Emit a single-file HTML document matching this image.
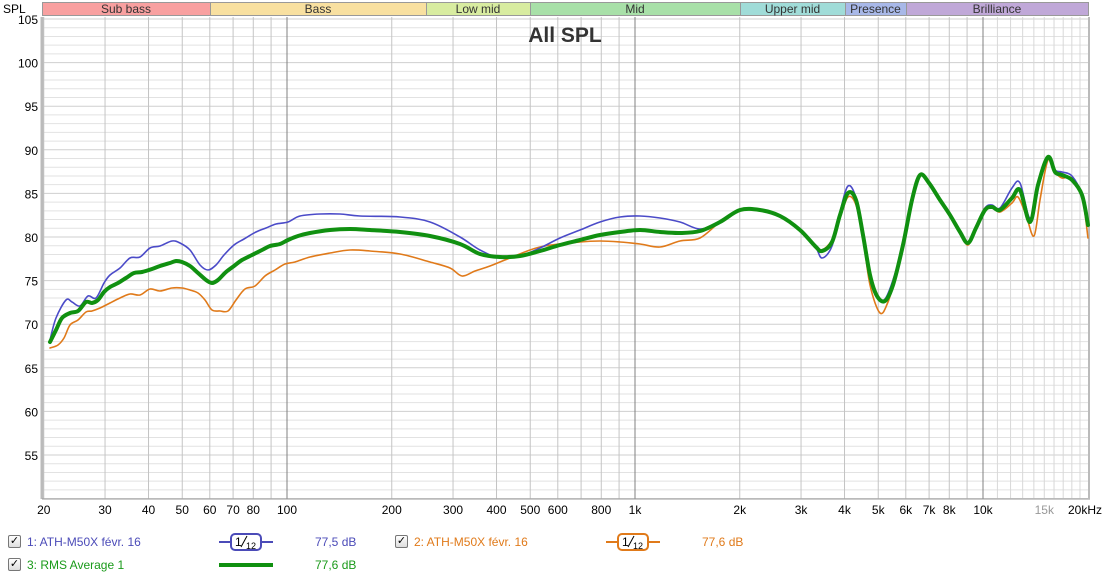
<!DOCTYPE html>
<html><head><meta charset="utf-8"><style>
body{margin:0;width:1110px;height:580px;background:#fff;overflow:hidden;font-family:"Liberation Sans",sans-serif;position:relative}
.t{position:absolute;font-size:12px;white-space:nowrap}
.cb{position:absolute;width:11px;height:11px;border:1px solid #777;border-radius:2px;background:linear-gradient(#fff,#ddd);font-size:11px;line-height:11px;text-align:center;color:#000}
</style></head><body>
<svg id="s" width="1110" height="580" style="position:absolute;left:0;top:0" xmlns="http://www.w3.org/2000/svg" font-family="Liberation Sans, sans-serif"></svg>
<div class="cb" style="left:8px;top:535px">✓</div>
<div class="t" style="left:27px;top:535px;color:#4b4bb8">1: ATH-M50X févr. 16</div>
<div class="t" style="left:315px;top:535px;color:#4b4bb8">77,5 dB</div>
<div class="cb" style="left:395px;top:535px">✓</div>
<div class="t" style="left:414px;top:535px;color:#e07a1a">2: ATH-M50X févr. 16</div>
<div class="t" style="left:702px;top:535px;color:#e07a1a">77,6 dB</div>
<div class="cb" style="left:8px;top:558px">✓</div>
<div class="t" style="left:27px;top:558px;color:#1a9a1a">3: RMS Average 1</div>
<div class="t" style="left:315px;top:558px;color:#1a9a1a">77,6 dB</div>
<script>
const s=document.getElementById('s');let h='';
const X=f=>287+348*Math.log10(f/100), Y=v=>19+(105-v)*8.72;
h+='<rect x="42" y="17" width="1046" height="482" fill="#fff"/>';
for(let v=50;v<=105;v++){const y=Y(v);h+=`<line x1="42" x2="1088" y1="${y}" y2="${y}" stroke="${v%5?'#e2e2e2':'#cfcfcf'}"/>`;}
let fs=[];for(let d of[10,100,1000])for(let k=1;k<10;k++)fs.push(k*d);fs.push(10000);for(let k=11;k<=19;k++)fs.push(k*1000);
for(let f of fs){if(f<20)continue;const x=X(f);const maj=[100,1000,10000].includes(f);h+=`<line x1="${x}" x2="${x}" y1="17" y2="499" stroke="${maj?'#808080':(f>10000?'#d8d8d8':'#c4c4c4')}"/>`;}
h+='<line x1="42" x2="42" y1="17" y2="499" stroke="#bbb" stroke-width="3"/><line x1="42" x2="1090" y1="499" y2="499" stroke="#999"/><line x1="1089" x2="1089" y1="17" y2="499" stroke="#bbb" stroke-width="2"/>';
const bands=[[42,210,'#f8a0a0','Sub bass'],[210,426,'#f8e0a0','Bass'],[426,530,'#d8eca0','Low mid'],[530,740,'#a8e0a8','Mid'],[740,845,'#a0dcd8','Upper mid'],[845,906,'#a8b8e8','Presence'],[906,1088,'#c0a8d8','Brilliance']];
for(const b of bands){h+=`<rect x="${b[0]+.5}" y="2.5" width="${b[1]-b[0]}" height="13" fill="${b[2]}" stroke="#999"/><text x="${(b[0]+b[1])/2}" y="13" font-size="12" text-anchor="middle" fill="#333">${b[3]}</text>`;}
h+='<text x="3" y="13" font-size="12">SPL</text>';
for(let v=55;v<=105;v+=5)h+=`<text x="38" y="${Y(v)+5}" font-size="12" text-anchor="end">${v}</text>`;
const xl=[[20,'20'],[30,'30'],[40,'40'],[50,'50'],[60,'60'],[70,'70'],[80,'80'],[100,'100'],[200,'200'],[300,'300'],[400,'400'],[500,'500'],[600,'600'],[800,'800'],[1000,'1k'],[2000,'2k'],[3000,'3k'],[4000,'4k'],[5000,'5k'],[6000,'6k'],[7000,'7k'],[8000,'8k'],[10000,'10k'],[15000,'15k']];
for(const[f,t]of xl)h+=`<text x="${X(f)}" y="514" font-size="12" text-anchor="middle" fill="${f==15000?'#999':'#000'}">${t}</text>`;
h+='<text x="1068" y="514" font-size="12">20kHz</text>';
h+='<text x="565" y="42" font-size="21" font-weight="bold" text-anchor="middle" fill="#333">All SPL</text>';
const hi=[[720,222],[740,210],[760,210],[780,216],[800,230],[815,246]];
const B=[[50,340],[56,318],[66,300],[72,302],[80,306],[88,296],[96,298],[104,283],[110,275],[120,268],[130,258],[140,257],[150,248],[160,246],[172,241],[180,243],[190,250],[200,265],[208,270],[216,265],[224,255],[234,245],[244,239],[256,232],[266,228],[276,224],[288,222],[300,216],[320,214],[340,214],[360,216],[400,217],[430,222],[460,237],[480,250],[500,258],[520,256],[540,248],[560,238],[580,230],[600,222],[620,217],[640,216],[660,218],[680,222],[700,229],...hi,[822,258],[832,246],[840,212],[848,186],[856,198],[863,235],[870,275],[877,297],[885,299],[893,280],[903,245],[912,200],[920,175],[929,183],[940,200],[950,215],[960,232],[968,243],[976,228],[985,208],[992,205],[1000,208],[1012,188],[1020,183],[1030,218],[1038,185],[1048,157],[1055,170],[1062,172],[1072,176],[1082,195],[1088,225]];
const O=[[50,348],[58,345],[64,338],[70,325],[78,320],[86,312],[92,311],[100,308],[110,303],[120,298],[130,294],[140,295],[150,289],[160,291],[172,288],[182,288],[190,290],[198,293],[205,300],[212,310],[220,311],[228,311],[236,300],[245,289],[255,286],[265,276],[275,270],[285,264],[295,262],[310,257],[330,253],[350,250],[370,251],[400,254],[430,262],[450,268],[462,276],[475,271],[490,266],[510,258],[540,247],[580,242],[600,241],[620,242],[640,244],[660,247],[680,241],[700,238],...hi,[822,250],[832,240],[840,218],[848,197],[856,205],[863,238],[870,285],[880,313],[888,302],[896,275],[905,240],[912,200],[920,175],[929,183],[940,200],[950,215],[960,232],[968,245],[976,228],[985,208],[992,207],[1000,212],[1012,203],[1018,197],[1026,215],[1034,236],[1040,200],[1048,160],[1055,172],[1062,178],[1072,178],[1082,196],[1088,238]];
const G=[[50,342],[56,330],[62,318],[70,313],[78,311],[86,302],[92,303],[98,300],[104,292],[110,287],[118,283],[126,278],[134,273],[142,272],[152,269],[160,266],[170,263],[176,261],[182,262],[190,266],[198,273],[206,280],[212,283],[218,280],[226,272],[234,266],[242,260],[252,255],[262,250],[270,246],[280,244],[288,240],[298,236],[310,233],[330,230],[350,229],[370,230],[400,232],[430,236],[460,244],[480,254],[500,257],[520,256],[540,251],[560,245],[580,240],[600,235],[620,232],[640,230],[660,232],[680,233],[700,231],...hi,[822,251],[832,242],[840,215],[848,193],[856,200],[863,235],[870,275],[877,296],[885,301],[893,285],[903,245],[912,200],[920,175],[929,183],[940,200],[950,215],[960,232],[968,243],[976,228],[985,210],[992,207],[1000,210],[1012,198],[1020,190],[1030,222],[1038,185],[1048,157],[1055,172],[1062,175],[1072,180],[1082,195],[1088,225]];
function cr(p){let d=`M${p[0][0]},${p[0][1]}`;for(let i=0;i<p.length-1;i++){const a=p[Math.max(i-1,0)],b=p[i],c=p[i+1],e=p[Math.min(i+2,p.length-1)];const c1=[b[0]+(c[0]-a[0])/6,b[1]+(c[1]-a[1])/6],c2=[c[0]-(e[0]-b[0])/6,c[1]-(e[1]-b[1])/6];d+=`C${c1[0].toFixed(1)},${c1[1].toFixed(1)} ${c2[0].toFixed(1)},${c2[1].toFixed(1)} ${c[0]},${c[1]}`;}return d;}
const pl=(p,c,w)=>`<path d="${cr(p)}" fill="none" stroke="${c}" stroke-width="${w}" stroke-linejoin="round" stroke-linecap="round"/>`;
h+=pl(O,'#e07a1a',1.6)+pl(B,'#4b4bc8',1.6)+pl(G,'#109010',4);
function ico(x,y,c){return `<line x1="${x}" x2="${x+54}" y1="${y}" y2="${y}" stroke="${c}" stroke-width="2"/><rect x="${x+12}" y="${y-8}" width="30" height="16" rx="4" fill="#fff" stroke="${c}" stroke-width="2"/><text x="${x+16}" y="${y+4}" font-size="12">1</text><line x1="${x+22}" y1="${y+5}" x2="${x+28}" y2="${y-6}" stroke="#000"/><text x="${x+27}" y="${y+7}" font-size="9">12</text>`;}
h+=ico(219,542,'#4b4bb8')+ico(606,542,'#e07a1a');
h+='<line x1="219" x2="273" y1="565" y2="565" stroke="#109010" stroke-width="4"/>';
s.innerHTML=h;
</script>
</body></html>
